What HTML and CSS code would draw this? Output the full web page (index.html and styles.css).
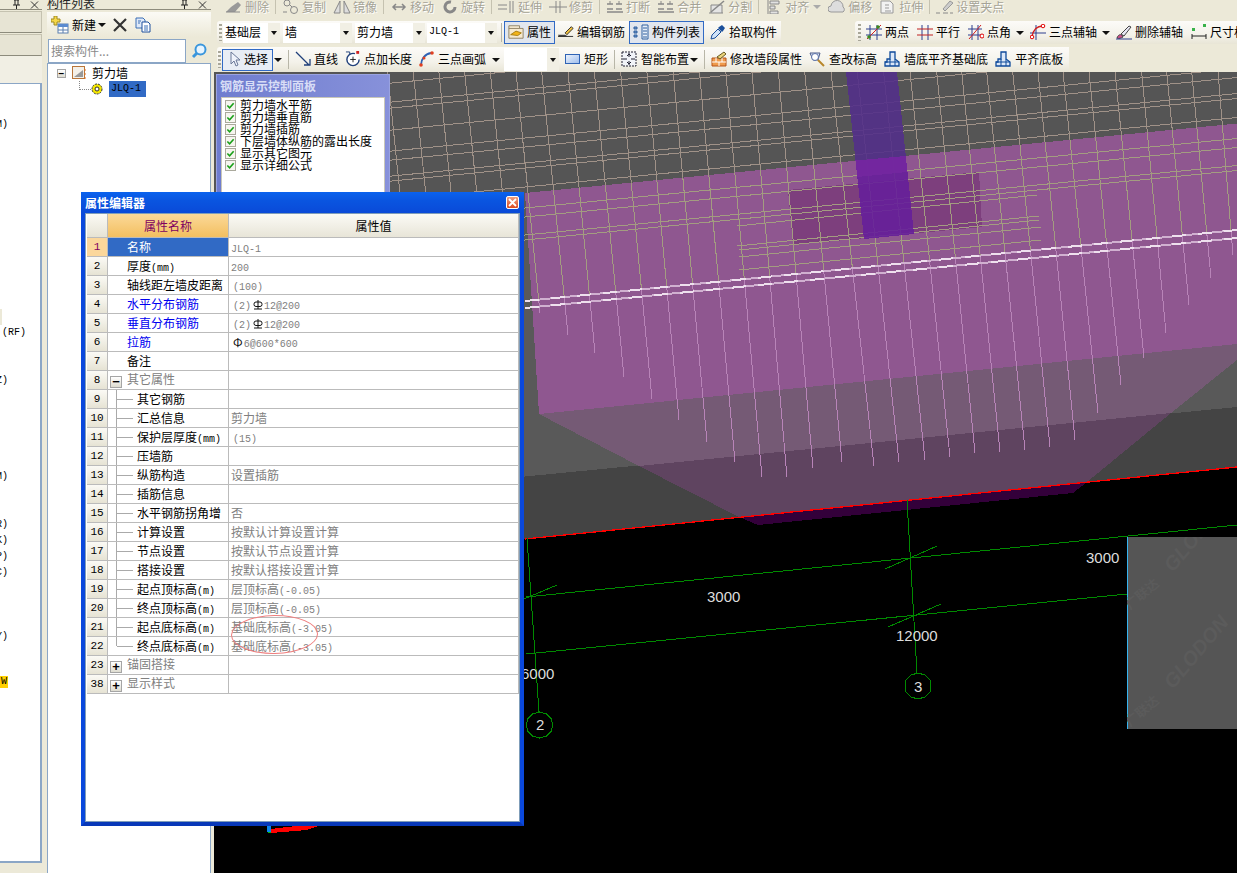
FILE: index.html
```html
<!DOCTYPE html>
<html lang="zh-CN">
<head>
<meta charset="utf-8">
<title>属性编辑器</title>
<link rel="stylesheet" href="styles.css">
</head>
<body>
<svg class="defs" width="0" height="0" aria-hidden="true">
  <symbol id="i-new" viewBox="0 0 18 18"><path d="M3 0h3v3h3v3H6v3H3V6H0V3h3z" fill="#f6d84a" stroke="#a08a20"/><rect x="7" y="8" width="10" height="9" fill="#fff" stroke="#5b7fae"/><path d="M7 8h10v3H7z" fill="#5b8bd0"/><path d="M7 14h10M12 11v6" stroke="#5b7fae"/></symbol>
  <symbol id="i-x" viewBox="0 0 14 14"><path d="M1 1l12 12M13 1L1 13" stroke="#333" stroke-width="2.2"/></symbol>
  <symbol id="i-copy" viewBox="0 0 16 16"><path d="M1 1h7l2 2v8H1z" fill="#dfe9f8" stroke="#3b6fb5"/><path d="M7 5h6l2 2v8H7z" fill="#fff" stroke="#1d4f9c"/><path d="M9 9h4M9 11h4M9 13h4M3 4h3M3 6h2" stroke="#3b6fb5"/></symbol>
  <symbol id="i-search" viewBox="0 0 16 16"><circle cx="9.500" cy="6.500" r="5" fill="#e6f4ff" stroke="#3a96dc" stroke-width="2"/><path d="M6 10l-4 4" stroke="#3a96dc" stroke-width="3"/></symbol>
  <symbol id="i-wall" viewBox="0 0 14 14"><rect x=".5" y=".5" width="12" height="12" fill="#f4f0e8" stroke="#b9763a"/><path d="M2 11l9-7v7z" fill="#999"/><path d="M13 3v2M13 7v2M13 11v2" stroke="#e07020"/></symbol>
  <symbol id="i-gear" viewBox="0 0 12 12"><circle cx="6" cy="6" r="5" fill="#f5e800" stroke="#333" stroke-dasharray="2 1"/><circle cx="6" cy="6" r="2" fill="#fff" stroke="#333"/></symbol>
  <symbol id="i-erase" viewBox="0 0 18 12"><path d="M1 11l5-5 7-5 3 3-6 7z" fill="#999"/><path d="M1 11h14" stroke="#888"/></symbol>
  <symbol id="i-dup" viewBox="0 0 18 14"><circle cx="5" cy="3" r="3" fill="none" stroke="#888"/><circle cx="12" cy="10" r="3.500" fill="none" stroke="#888"/><path d="M1 12h4M8 5l2 2" stroke="#888"/></symbol>
  <symbol id="i-mirror" viewBox="0 0 18 14"><path d="M7 1v12H1zM11 1v12h6z" fill="#ddd" stroke="#888"/></symbol>
  <symbol id="i-move" viewBox="0 0 18 14"><path d="M3 7h12M12 4l3 3-3 3M6 4L3 7l3 3" fill="none" stroke="#888" stroke-width="1.500"/></symbol>
  <symbol id="i-rotate" viewBox="0 0 18 14"><path d="M14 7a5 5 0 1 1-4-5" fill="none" stroke="#888" stroke-width="3"/></symbol>
  <symbol id="i-extend" viewBox="0 0 18 14"><path d="M0 5h9M0 9h9M12 1v12M15 1v12" stroke="#888"/></symbol>
  <symbol id="i-trim" viewBox="0 0 18 14"><path d="M0 7h18M7 1v12M11 1v12" stroke="#888"/></symbol>
  <symbol id="i-break" viewBox="0 0 18 14"><path d="M1 4h6M10 4h6M1 9h6M10 9h6M1 12h16" stroke="#888" stroke-width="1.500"/><path d="M4 1v3M13 1v3" stroke="#888"/></symbol>
  <symbol id="i-split" viewBox="0 0 18 14"><path d="M1 13h14M3 13V5h11v8" fill="#e4e4e4" stroke="#888"/><path d="M3 12L16 1" stroke="#888" stroke-width="1.500"/></symbol>
  <symbol id="i-align" viewBox="0 0 18 14"><path d="M3 0v14" stroke="#888"/><path d="M5 1h9v3H5zM5 6h5v3H5zM5 11h8v3H5z" fill="#e2e2e2" stroke="#888"/></symbol>
  <symbol id="i-offset" viewBox="0 0 18 14"><path d="M3 12a3 3 0 0 1 0-6 6 6 0 0 1 12 1 3 3 0 0 1 0 5z" fill="#ddd" stroke="#999"/></symbol>
  <symbol id="i-stretch" viewBox="0 0 18 14"><path d="M2 1h9l3 3v9H2z" fill="#f2f2f2" stroke="#999"/><path d="M6 5h4M6 8h4M6 11h6" stroke="#999"/></symbol>
  <symbol id="i-grab" viewBox="0 0 18 14"><path d="M7 9l7-8 3 2-8 8z" fill="#ccc" stroke="#999"/><path d="M0 13h4M7 13h5M14 13h3" stroke="#888"/></symbol>
  <symbol id="i-attr" viewBox="0 0 18 16"><path d="M1 1h12v3h4v11H1z" fill="#f6ead0" stroke="#8a7b5c"/><path d="M1 4h12" stroke="#8a7b5c"/><path d="M3 11l6-4 6 2-4 3z" fill="#f3b417" stroke="#a47a10"/></symbol>
  <symbol id="i-pen" viewBox="0 0 18 16"><path d="M0 11h8l3 2H1z" fill="#444"/><path d="M8 9l7-7 2 2-7 7z" fill="#f0c040" stroke="#222"/><path d="M0 13h17" stroke="#222"/></symbol>
  <symbol id="i-list" viewBox="0 0 16 16"><path d="M9 1h6v14H9z" fill="#e6eef8" stroke="#31609f"/><path d="M10 4h4M10 7h4M10 10h4M10 13h4" stroke="#31609f"/><path d="M1 3h3v2H1zM1 7h3v2H1zM1 11h3v2H1z" fill="#6d96c8" stroke="#31609f"/></symbol>
  <symbol id="i-drop" viewBox="0 0 16 16"><path d="M1 15l1-4 6-6 3 3-6 6z" fill="#cfe2f7" stroke="#1b4f9b"/><path d="M9 3l3-2 3 3-2 3 -1 1-4-4z" fill="#1b4f9b"/></symbol>
  <symbol id="i-two" viewBox="0 0 16 16"><path d="M4 1v15M11 1v15M0 5h16M0 11h16" stroke="#2c3f8f"/><path d="M1 15L15 1" stroke="#d02020"/><circle cx="3" cy="13" r="1.800" fill="#3c8a20"/><circle cx="12" cy="3" r="1.800" fill="#3c8a20"/></symbol>
  <symbol id="i-par" viewBox="0 0 16 16"><path d="M5 1v15M11 1v15" stroke="#2c3f8f"/><path d="M0 5h16M0 11h16" stroke="#c02020"/></symbol>
  <symbol id="i-ang" viewBox="0 0 16 16"><path d="M4 1v15M10 1v15M0 5h14M0 11h14" stroke="#2c3f8f"/><path d="M1 15L13 1" stroke="#d02020"/><circle cx="14" cy="12" r="2" fill="#fff" stroke="#e00000"/></symbol>
  <symbol id="i-arc3" viewBox="0 0 16 16"><path d="M6 1v15M0 9h16" stroke="#2c3f8f"/><path d="M2 13C3 6 7 2 13 2" fill="none" stroke="#d02020" stroke-width="1.300"/><circle cx="2" cy="13" r="1.800" fill="#fff" stroke="#e00000"/><circle cx="13" cy="2" r="1.800" fill="#fff" stroke="#e00000"/></symbol>
  <symbol id="i-brush" viewBox="0 0 16 16"><path d="M5 10l8-8 2 1-7 9z" fill="#e8e8f4" stroke="#444"/><path d="M1 14c1-3 3-4 5-3l1 2c-2 1-4 2-6 1z" fill="#d0508c" stroke="#444"/><path d="M0 15h16" stroke="#2c3f8f"/></symbol>
  <symbol id="i-dim" viewBox="0 0 16 16"><rect x="1" y="4" width="3" height="3" fill="#38b24a"/><rect x="12" y="0" width="3" height="3" fill="#38b24a"/><path d="M1 10v5M15 10v5M1 12h14" stroke="#222"/></symbol>
  <symbol id="i-cursor" viewBox="0 0 16 16"><path d="M5 1v12l3-3 2 5 2-1-2-5h4z" fill="#eef2fb" stroke="#6a7898"/></symbol>
  <symbol id="i-line" viewBox="0 0 16 16"><path d="M1 1l13 13M9 14h6V8" fill="none" stroke="#1f3f7a" stroke-width="1.300"/></symbol>
  <symbol id="i-plus" viewBox="0 0 17 17"><circle cx="8.500" cy="9" r="6.500" fill="#fff" stroke="#1f3f7a" stroke-width="1.500" stroke-dasharray="32 9"/><path d="M5.500 9h6M8.500 6v6" stroke="#222"/><path d="M1 1h4v3" fill="none" stroke="#1f3f7a"/><rect x="12" y="0" width="3" height="3" fill="#d02020"/></symbol>
  <symbol id="i-arc" viewBox="0 0 16 16"><path d="M2 14C2 8 6 3 12 2" fill="none" stroke="#2f63b5" stroke-width="1.800"/><circle cx="2" cy="14" r="1.800" fill="#e04020"/><circle cx="5" cy="7" r="1.500" fill="#e04020"/><circle cx="13" cy="2" r="1.800" fill="#e04020"/></symbol>
  <symbol id="i-rect" viewBox="0 0 16 12"><defs><linearGradient id="rg" x1="0" y1="0" x2="1" y2="1"><stop offset="0" stop-color="#eef4fd"/><stop offset="1" stop-color="#9dbcec"/></linearGradient></defs><rect x=".5" y="1.500" width="14" height="9" fill="url(#rg)" stroke="#2f63b5"/></symbol>
  <symbol id="i-smart" viewBox="0 0 16 16"><rect x="1" y="1" width="14" height="14" fill="#f2f4f8" stroke="#223" stroke-dasharray="2 1"/><path d="M8 2v4M8 10v4M2 8h4M10 8h4M6 5l2-2 2 2M6 11l2 2 2-2" fill="none" stroke="#223"/></symbol>
  <symbol id="i-brick" viewBox="0 0 16 16"><path d="M1 7h14v8H1z" fill="#ef9a4c" stroke="#b5541a"/><path d="M1 11h14M5 7v4M11 7v4M8 11v4" stroke="#fff"/><path d="M6 6l7-5 2 2-6 5z" fill="#e8d27a" stroke="#6a5a20"/></symbol>
  <symbol id="i-lens" viewBox="0 0 16 16"><path d="M1 2h10l-2 7H4z" fill="#dfe6f5" stroke="#4a5a88"/><circle cx="6" cy="6" r="3.500" fill="#fff" stroke="#5870a8"/><path d="M9 9l6 6" stroke="#b8862a" stroke-width="2"/></symbol>
  <symbol id="i-base" viewBox="0 0 16 16"><path d="M1 15v-4h2V8h3V1h5v7l4 3v4z" fill="#dbe7f8" stroke="#0f4a9a" stroke-width="1.300"/><path d="M1 11h14M6 8v7M11 8v7" stroke="#0f4a9a"/></symbol>
  <symbol id="i-check" viewBox="0 0 10 10"><path d="M1.500 5l2.500 2.500L8.500 2.500" fill="none" stroke="#19a019" stroke-width="1.800"/></symbol>
  <symbol id="i-pin" viewBox="0 0 9 10"><path d="M2 0h5M3 0v5M6 0v5M1 5h7M4.500 5v5" stroke="#222"/></symbol>
  <symbol id="i-close" viewBox="0 0 9 9"><path d="M1 1l7 7M8 1L1 8" stroke="#333"/></symbol>
  <symbol id="i-closew" viewBox="0 0 9 9"><path d="M1 1l7 7M8 1L1 8" stroke="#fff" stroke-width="1.800"/></symbol>
  <symbol id="i-grade" viewBox="0 0 10 10"><path d="M5 0v9M1 9h8" stroke="#111"/><rect x="1" y="2" width="8" height="4.500" rx="2" fill="none" stroke="#111"/></symbol>
</svg>

<div class="app">
  <aside class="left">
    <div class="ptitle ptitle-left"><svg class="pin"><use href="#i-pin"/></svg><svg class="pin"><use href="#i-close"/></svg></div>
    <div class="left-head"></div>
    <div class="left-head"></div>
    <div class="left-band"></div>
    <ul class="frags">
      <li></li><li></li><li class="f8">(M)</li><li></li><li></li><li></li><li></li><li></li><li></li><li></li><li></li><li></li><li></li><li></li>
      <li class="patch"></li><li class="f26">(RF)</li><li></li><li></li><li class="f8">(Z)</li><li></li><li></li><li></li><li></li><li></li>
      <li class="f8">(M)</li><li></li><li></li><li class="f8">(R)</li><li class="f8">(K)</li><li class="f8">(P)</li><li class="f8">(C)</li><li></li><li></li><li></li>
      <li class="f8">(Y)</li><li></li><li></li><li class="f8 tw"><mark class="hl">W</mark></li>
    </ul>
    <div class="left-foot"></div>
  </aside>
  <div class="sash"></div>
  <section class="list">
    <div class="ptitle"><span class="ptitle-text">构件列表</span><svg class="pin"><use href="#i-pin"/></svg><svg class="pin"><use href="#i-close"/></svg></div>
    <div class="list-tools">
      <svg class="ic18"><use href="#i-new"/></svg><span>新建</span><i class="arrow"></i>
      <svg class="ic-x"><use href="#i-x"/></svg>
      <svg class="ic-copy"><use href="#i-copy"/></svg>
    </div>
    <div class="searchbar">
      <div class="search-input">搜索构件...</div>
      <svg class="ic-search"><use href="#i-search"/></svg>
    </div>
    <div class="tree">
      <div class="tree-root"><span class="toggle">−</span><svg class="ic-wall"><use href="#i-wall"/></svg><span>剪力墙</span></div>
      <div class="tree-leaf"><span class="dots"></span><svg class="ic-gear"><use href="#i-gear"/></svg><span class="leaf-sel m">JLQ-1</span></div>
    </div>
  </section>

  <main class="main">
    <div class="row1">
      <span class="tool"><svg class="ic"><use href="#i-erase"/></svg>删除</span><i class="sep"></i>
      <span class="tool"><svg class="ic"><use href="#i-dup"/></svg>复制</span>
      <span class="tool"><svg class="ic"><use href="#i-mirror"/></svg>镜像</span><i class="sep"></i>
      <span class="tool"><svg class="ic"><use href="#i-move"/></svg>移动</span>
      <span class="tool"><svg class="ic"><use href="#i-rotate"/></svg>旋转</span><i class="sep"></i>
      <span class="tool"><svg class="ic"><use href="#i-extend"/></svg>延伸</span>
      <span class="tool"><svg class="ic"><use href="#i-trim"/></svg>修剪</span><i class="sep"></i>
      <span class="tool"><svg class="ic"><use href="#i-break"/></svg>打断</span>
      <span class="tool"><svg class="ic"><use href="#i-break"/></svg>合并</span>
      <span class="tool"><svg class="ic"><use href="#i-split"/></svg>分割</span><i class="sep"></i>
      <span class="tool"><svg class="ic"><use href="#i-align"/></svg>对齐<i class="arrow arrow-off"></i></span>
      <span class="tool"><svg class="ic"><use href="#i-offset"/></svg>偏移</span>
      <span class="tool"><svg class="ic"><use href="#i-stretch"/></svg>拉伸</span><i class="sep"></i>
      <span class="tool"><svg class="ic"><use href="#i-grab"/></svg>设置夹点</span>
    </div>

    <div class="row2">
      <div class="strip strip-a">
        <i class="grip"></i>
        <div class="combo c57"><span>基础层</span><b class="combo-btn"><i class="arrow"></i></b></div>
        <div class="combo c69"><span>墙</span><b class="combo-btn"><i class="arrow"></i></b></div>
        <div class="combo c70"><span>剪力墙</span><b class="combo-btn"><i class="arrow"></i></b></div>
        <div class="combo c70 tight"><span class="m">JLQ-1</span><b class="combo-btn"><i class="arrow"></i></b></div>
        <i class="vsep"></i>
        <span class="btn btn-attr"><svg class="ic16"><use href="#i-attr"/></svg>属性</span>
        <span class="tool2"><svg class="ic16"><use href="#i-pen"/></svg>编辑钢筋</span>
        <span class="btn btn-list"><svg class="ic16"><use href="#i-list"/></svg>构件列表</span>
        <span class="tool2"><svg class="ic16"><use href="#i-drop"/></svg>拾取构件</span>
      </div>
      <div class="strip strip-b">
        <i class="grip"></i>
        <span class="tool2"><svg class="ic16"><use href="#i-two"/></svg>两点</span>
        <span class="tool2"><svg class="ic16"><use href="#i-par"/></svg>平行</span>
        <span class="tool2"><svg class="ic16"><use href="#i-ang"/></svg>点角</span><i class="arrow arrow-b"></i>
        <span class="tool2"><svg class="ic16"><use href="#i-arc3"/></svg>三点辅轴</span><i class="arrow arrow-b"></i>
        <span class="tool2"><svg class="ic16"><use href="#i-brush"/></svg>删除辅轴</span>
        <span class="tool2"><svg class="ic16"><use href="#i-dim"/></svg>尺寸标注</span>
      </div>
    </div>

    <div class="row3">
      <div class="strip strip-c">
        <i class="grip"></i>
        <span class="btn btn-sel"><svg class="ic16"><use href="#i-cursor"/></svg>选择</span><i class="arrow arrow-s"></i>
        <i class="vsep"></i>
        <span class="tool3"><svg class="ic16"><use href="#i-line"/></svg>直线</span>
        <span class="tool3"><svg class="ic16"><use href="#i-plus"/></svg>点加长度</span>
        <span class="tool3"><svg class="ic16"><use href="#i-arc"/></svg>三点画弧</span><i class="arrow arrow-s3"></i>
        <div class="combo c55"><span></span><b class="combo-btn"><i class="arrow"></i></b></div>
        <span class="tool3"><svg class="ic16"><use href="#i-rect"/></svg>矩形</span>
        <i class="vsep"></i>
        <span class="tool3 g4"><svg class="ic16"><use href="#i-smart"/></svg>智能布置</span><i class="arrow arrow-s2"></i>
        <i class="vsep"></i>
        <span class="tool3"><svg class="ic16"><use href="#i-brick"/></svg>修改墙段属性</span>
        <span class="tool3 g4"><svg class="ic16"><use href="#i-lens"/></svg>查改标高</span>
        <span class="tool3 g4"><svg class="ic16"><use href="#i-base"/></svg>墙底平齐基础底</span>
        <span class="tool3 g4"><svg class="ic16"><use href="#i-base"/></svg>平齐底板</span>
      </div>
    </div>

    <svg class="canvas" viewBox="214 72 1023 801" width="1023" height="801">
      <defs>
        <clipPath id="clip-top"><polygon points="214,72 1237,72 1237,123.500 214,223.400"/></clipPath>
        <clipPath id="clip-mid"><polygon points="214,223.400 1237,123.500 1237,230 214,331.400"/></clipPath>
        <clipPath id="clip-low"><polygon points="214,331.400 1237,230 1237,600 214,600"/></clipPath>
        <clipPath id="clip-gray"><rect x="1127" y="537" width="110" height="192"/></clipPath>
        <path id="verticals" d="M387.500 72L414 330M413.200 72L440 330M438.900 72L465 330M464.600 72L490.600 330M490.300 72L516.300 330M516 72L540 313M541.700 72L568 335M568 72L595 353M594.300 72L624 377M620.600 72L652 399M646.900 72L679 420M673.200 72L707 442M699.500 72L735 462M725.800 72L762 477M752 72L787 477M778.400 72L813 468M804.700 72L842 462M831 72L874 466M857.300 72L899 462M883.600 72L925 460M910 72L950 457M936.700 72L975 453M961.700 72L1000 452M986.700 72L1025 450M1012.700 72L1050 447M1038 72L1075 440M1063 72L1098 413M1089 72L1121 385M1115 72L1144 358M1141.700 72L1166 333M1166.700 72L1189 305M1191.700 72L1211 278M1218 72L1233 255"/>
        <path id="horizontals" d="M388 83.400L1237 0.500M388 102.400L1237 19.500M388 108.400L1237 25.500M388 130.400L1237 47.500M388 151.400L1237 68.500M388 160.400L1237 77.500M388 176.400L1237 93.500M388 181.400L1237 98.500M388 200.400L1237 117.500M388 221.400L1237 138.500M388 230.400L1237 147.500M388 248.400L1237 165.500M388 253.400L1237 170.500"/>
      </defs>
      <rect class="f-black" x="214" y="72" width="1023" height="801"/>
      <polygon class="f-plate" points="214,72 1237,72 1237,123.500 214,223.400"/>
      <polygon class="f-side" points="520,190 700,300 1237,344 1237,467 520,539"/>
      <polygon class="f-sidedark" points="520,477 1237,407 1237,467 520,539"/>
      <polygon class="f-wall" points="525,193 1237,123.500 1237,344 539,414"/>
      <polygon class="f-skirt" points="539,414 1237,344 1237,360 1171,413 639,466"/>
      <polygon class="f-skirtdark" points="639,466 1171,413 1087,482 739,517"/>
      <polygon class="f-strip" points="739,517 1087,482 1073,493 758,525"/>
      <polygon class="f-rect" points="788,190 979,172 982,227 793,245"/>
      <g class="s-top" clip-path="url(#clip-top)"><use href="#verticals"/><use href="#horizontals"/></g>
      <g class="s-mid" clip-path="url(#clip-mid)"><use href="#verticals"/><use href="#horizontals"/><path d="M737 226L1037 195M737 246L1039 216M739 250L1039 220M739 257L1041 227M739 270L1041 240"/></g>
      <g class="s-low" clip-path="url(#clip-low)"><use href="#verticals"/></g>
      <polygon class="f-col1" points="846,72 897,72 905.800,156 855.500,160.500"/>
      <polygon class="f-col2" points="855.500,160.500 905.800,156 914,234 864,239"/>
      <polygon class="f-col3" points="855.500,160.500 905.800,156 907.500,172 857.300,177"/>
      <path class="s-rail" d="M525 301L1237 230M525 308L1237 238"/>
      <path class="s-raildash" d="M525 301L1237 230M525 308L1237 238"/>
      <path class="s-red" d="M525 539L1237 467"/>
      <path class="s-axis" d="M526 597L1237 525M526 654L1127 594M527 538L539 712M907 500L917 673M885 569L937 546M888 627L941 604M524 599L557 585"/>
      <polygon class="s-ring" points="918,673 925,675 930,680 931,686 930,692 925,697 918,699 911,697 906,692 905,686 906,680 911,675"/>
      <polygon class="s-ring" points="539.500,712 546.500,714 551.500,719 552.500,725 551.500,731 546.500,736 539.500,738 532.500,736 527.500,731 526.500,725 527.500,719 532.500,714"/>
      <text class="t-dim" x="707" y="602">3000</text>
      <text class="t-dim" x="1086" y="563">3000</text>
      <text class="t-dim" x="896" y="641">12000</text>
      <text class="t-dim" x="521" y="679">6000</text>
      <text class="t-dim" x="914" y="692">3</text>
      <text class="t-dim" x="536" y="730">2</text>
      <rect class="f-plate" x="1127" y="537" width="110" height="192"/>
      <path class="s-cyan" d="M1127.500 537V729"/>
      <g clip-path="url(#clip-gray)" class="wm">
        <text transform="translate(1173 573) rotate(-50)">GLODON</text>
        <text transform="translate(1173 690) rotate(-50)">GLODON</text>
        <text transform="translate(1130 610) rotate(-40)" class="wm-cn">广联达</text>
        <text transform="translate(1130 727) rotate(-40)" class="wm-cn">广联达</text>
      </g>
      <polygon class="f-red" points="271,829 296,826 318,826 307,830 271,833"/>
      <rect class="f-blue" x="267" y="826" width="4" height="6"/>
      <rect class="f-green" x="268" y="832" width="3" height="1"/>
    </svg>
  </main>

  <div class="rebar-panel">
    <div class="rebar-title">钢筋显示控制面板</div>
    <ul class="rebar-body">
      <li><span class="cb"><svg><use href="#i-check"/></svg></span>剪力墙水平筋</li>
      <li><span class="cb"><svg><use href="#i-check"/></svg></span>剪力墙垂直筋</li>
      <li><span class="cb"><svg><use href="#i-check"/></svg></span>剪力墙插筋</li>
      <li><span class="cb"><svg><use href="#i-check"/></svg></span>下层墙体纵筋的露出长度</li>
      <li><span class="cb"><svg><use href="#i-check"/></svg></span>显示其它图元</li>
      <li><span class="cb"><svg><use href="#i-check"/></svg></span>显示详细公式</li>
    </ul>
  </div>

  <div class="dialog">
    <div class="dlg-title"><span>属性编辑器</span><span class="dlg-close"><svg><use href="#i-closew"/></svg></span></div>
    <div class="dlg-body">
      <table class="props">
        <thead>
          <tr><th class="num"></th><th class="h-name">属性名称</th><th class="h-val">属性值</th></tr>
        </thead>
        <tbody>
          <tr><td class="num num-on">1</td><td class="n n-sel">名称</td><td class="v"><span class="m">JLQ-1</span></td></tr>
          <tr><td class="num">2</td><td class="n">厚度<span class="m">(mm)</span></td><td class="v"><span class="m">200</span></td></tr>
          <tr><td class="num">3</td><td class="n">轴线距左墙皮距离</td><td class="v v-in"><span class="m">(100)</span></td></tr>
          <tr><td class="num">4</td><td class="n blue">水平分布钢筋</td><td class="v v-in"><span class="m">(2)</span><svg class="grade"><use href="#i-grade"/></svg><span class="m">12@200</span></td></tr>
          <tr><td class="num">5</td><td class="n blue">垂直分布钢筋</td><td class="v v-in"><span class="m">(2)</span><svg class="grade"><use href="#i-grade"/></svg><span class="m">12@200</span></td></tr>
          <tr><td class="num">6</td><td class="n blue">拉筋</td><td class="v v-in"><span class="phi">Φ</span><span class="m">6@600*600</span></td></tr>
          <tr><td class="num">7</td><td class="n">备注</td><td class="v"></td></tr>
          <tr><td class="num">8</td><td class="n grp"><span class="toggle">−</span>其它属性</td><td class="v"></td></tr>
          <tr><td class="num">9</td><td class="n ch">其它钢筋</td><td class="v"></td></tr>
          <tr><td class="num">10</td><td class="n ch">汇总信息</td><td class="v">剪力墙</td></tr>
          <tr><td class="num">11</td><td class="n ch">保护层厚度<span class="m">(mm)</span></td><td class="v v-in"><span class="m">(15)</span></td></tr>
          <tr><td class="num">12</td><td class="n ch">压墙筋</td><td class="v"></td></tr>
          <tr><td class="num">13</td><td class="n ch">纵筋构造</td><td class="v">设置插筋</td></tr>
          <tr><td class="num">14</td><td class="n ch">插筋信息</td><td class="v"></td></tr>
          <tr><td class="num">15</td><td class="n ch">水平钢筋拐角增</td><td class="v">否</td></tr>
          <tr><td class="num">16</td><td class="n ch">计算设置</td><td class="v">按默认计算设置计算</td></tr>
          <tr><td class="num">17</td><td class="n ch">节点设置</td><td class="v">按默认节点设置计算</td></tr>
          <tr><td class="num">18</td><td class="n ch">搭接设置</td><td class="v">按默认搭接设置计算</td></tr>
          <tr><td class="num">19</td><td class="n ch">起点顶标高<span class="m">(m)</span></td><td class="v">层顶标高<span class="m">(-0.05)</span></td></tr>
          <tr><td class="num">20</td><td class="n ch">终点顶标高<span class="m">(m)</span></td><td class="v">层顶标高<span class="m">(-0.05)</span></td></tr>
          <tr><td class="num">21</td><td class="n ch">起点底标高<span class="m">(m)</span></td><td class="v">基础底标高<span class="m">(-3.05)</span></td></tr>
          <tr><td class="num">22</td><td class="n ch ch-last">终点底标高<span class="m">(m)</span></td><td class="v">基础底标高<span class="m">(-3.05)</span></td></tr>
          <tr><td class="num">23</td><td class="n grp"><span class="toggle">+</span>锚固搭接</td><td class="v"></td></tr>
          <tr><td class="num">38</td><td class="n grp"><span class="toggle">+</span>显示样式</td><td class="v"></td></tr>
        </tbody>
      </table>
    </div>
    <i class="markup"></i>
  </div>
</div>
</body>
</html>
```

FILE: styles.css
```css
* { box-sizing: border-box; }
html, body { margin: 0; padding: 0; }
body {
  width: 1237px;
  height: 873px;
  overflow: hidden;
  background: #ece9d8;
  font: 12px/16px "Noto Sans CJK SC", "Liberation Sans", sans-serif;
  color: #000;
}
ul { list-style: none; margin: 0; padding: 0; }
i { font-style: normal; }
.defs { position: absolute; }
.m { font-family: "Liberation Mono", monospace; font-size: 10px; line-height: 10px; }

.app {
  position: relative;
  display: grid;
  grid-template-columns: 42px 5px 164px 1026px;
  width: 1237px;
  height: 873px;
}

/* left panel */
.left { display: flex; flex-direction: column; height: 873px; overflow: hidden; }
.ptitle {
  display: flex;
  align-items: center;
  justify-content: flex-end;
  gap: 9px;
  height: 10px;
  padding-right: 4px;
  border-bottom: 1px solid #8d8b7c;
  overflow: hidden;
}
.ptitle-left { padding-right: 3px; }
.ptitle-text { margin-right: auto; margin-top: -4px; font-size: 12px; color: #222; }
.pin { width: 9px; height: 10px; flex: none; }
.left-head {
  height: 22px;
  margin-top: 1px;
  background: #e7e4d4;
  border: 1px solid #c5c2b0;
  border-left: 0;
  border-bottom-color: #8d8b7c;
}
.left-band { height: 27px; background: #f1efe4; }
.frags {
  flex: 1;
  padding-top: 1px;
  background: #fff;
  border-right: 2px solid #8ba6c6;
  border-top: 1px solid #8ba6c6;
  border-bottom: 2px solid #8ba6c6;
  overflow: hidden;
}
.frags li {
  display: flex;
  justify-content: flex-end;
  height: 16px;
  white-space: nowrap;
  overflow: hidden;
  font: 10px/16px "Liberation Mono", monospace;
}
.f8 { width: 8px; }
.f26 { width: 26px; }
.patch { width: 2px; background: #ece9d8; }
.tw { margin-top: -3px; }
.hl { background: #ffd000; color: #000; padding: 0 1px; height: 12px; line-height: 12px; margin-top: 2px; }
.left-foot { height: 10px; flex: none; }
.sash { background: #ece9d8; }

/* component list */
.list { display: flex; flex-direction: column; width: 164px; height: 873px; }
.list-tools {
  display: flex;
  align-items: center;
  height: 25px;
  margin-top: 2px;
  padding-left: 4px;
  background: linear-gradient(#fbfaf5, #ece9d8);
}
.ic18 { width: 18px; height: 18px; margin-right: 3px; }
.list-tools .arrow { margin-left: 2px; }
.ic-x { width: 14px; height: 14px; margin-left: 7px; }
.ic-copy { width: 16px; height: 16px; margin-left: 8px; }
.searchbar { display: flex; align-items: center; height: 26px; padding-top: 1px; }
.search-input {
  width: 138px;
  height: 24px;
  margin-left: 1px;
  padding: 2px;
  background: #fff;
  border: 1px solid #8ba6c6;
  color: #8a8a8a;
  line-height: 18px;
}
.ic-search { width: 16px; height: 16px; margin-left: 5px; }
.tree {
  flex: 1;
  background: #fff;
  border: 1px solid #8ba6c6;
  border-bottom: 0;
  padding-top: 1px;
}
.tree-root { display: flex; align-items: center; height: 16px; padding-left: 9px; }
.toggle {
  display: inline-block;
  flex: none;
  width: 12px;
  height: 12px;
  border: 1px solid #a5a5a5;
  background: linear-gradient(#fff, #dedcd0);
  font: 700 13px/10px "Liberation Sans", sans-serif;
  text-align: center;
  color: #000;
}
.tree-root .toggle { width: 9px; height: 9px; font-size: 10px; line-height: 7px; }
.ic-wall { width: 14px; height: 14px; margin: 0 6px; }
.tree-leaf { display: flex; align-items: center; height: 16px; }
.dots { width: 12px; height: 9px; margin: -7px 0 0 31px; border-left: 1px dotted #888; border-bottom: 1px dotted #888; flex: none; }
.ic-gear { width: 12px; height: 12px; margin: 0 6px 0 0; }
.leaf-sel { width: 37px; height: 16px; padding-left: 2px; background: #316ac5; line-height: 16px; }

/* main column */
.main { display: flex; flex-direction: column; width: 1023px; height: 873px; margin-left: 3px; overflow: hidden; }
.row1 {
  display: flex;
  align-items: center;
  gap: 7px;
  height: 14px;
  padding-left: 11px;
  margin-bottom: 7px;
  color: #a5a396;
  text-shadow: 1px 1px 0 #fff;
  white-space: nowrap;
  line-height: 14px;
}
.tool { display: inline-flex; align-items: center; gap: 2px; flex: none; }
.ic { width: 18px; height: 14px; flex: none; }
.sep { width: 1px; height: 14px; background: #c5c2b0; margin: 0 -1px; flex: none; }
.arrow {
  display: inline-block;
  flex: none;
  width: 0;
  height: 0;
  border-left: 4px solid transparent;
  border-right: 4px solid transparent;
  border-top: 4px solid #111;
}
.arrow-off { border-top-color: #aaa; margin-left: 2px; }

.row2 { display: flex; height: 23px; margin-bottom: 3px; padding-left: 3px; white-space: nowrap; }
.strip {
  display: flex;
  align-items: center;
  background: linear-gradient(#fcfbf8, #f4f2ea 60%, #e8e5d6);
  border-radius: 3px 0 0 3px;
}
.strip-a { width: 564px; flex: none; gap: 3px; }
.strip-b { margin-left: 74px; gap: 8px; width: 382px; flex: none; overflow: hidden; padding-left: 1px; }
.grip { width: 3px; height: 17px; margin: 0 2px; flex: none; background: repeating-linear-gradient(#a8a698 0 2px, transparent 2px 4px); }
.strip-a .grip { margin-right: -2px; }
.strip-b .grip { margin-right: -3px; }
.combo { display: flex; align-items: center; justify-content: space-between; height: 20px; background: #fff; flex: none; overflow: hidden; }
.combo > span { padding: 0 0 2px 2px; }
.combo-btn { display: flex; align-items: center; justify-content: center; width: 12px; height: 20px; background: #f1efe4; flex: none; }
.combo-btn .arrow { border-left-width: 3px; border-right-width: 3px; }
.c57 { width: 57px; }
.c69 { width: 69px; }
.c70 { width: 70px; }
.c55 { width: 55px; }
.tight { margin-left: -1px; }
.vsep { width: 1px; height: 19px; background: #b8b6a8; flex: none; margin: 0 -1px 0 1px; }
.btn {
  display: inline-flex;
  align-items: center;
  gap: 3px;
  flex: none;
  height: 23px;
  padding: 0 0 2px 3px;
  background: #e1e6ee;
  border: 1px solid #316ac5;
}
.ic16 { width: 16px; height: 16px; flex: none; }
.btn-attr { width: 51px; }
.btn-list { width: 75px; margin: 0 3px 0 1px; }
.btn-sel { width: 51px; height: 22px; background: #e8edf5; gap: 2px; }
.tool2 { display: inline-flex; align-items: center; gap: 3px; flex: none; padding-bottom: 2px; }
.strip-b .arrow-b { margin: 0 -2px 0 -3px; }

.row3 { display: flex; height: 25px; padding-left: 3px; white-space: nowrap; }
.strip-c { width: 852px; gap: 7px; flex: none; }
.strip-c .grip { margin: 0 -6px 0 1px; }
.tool3 { display: inline-flex; align-items: center; gap: 3px; flex: none; padding-bottom: 2px; }
.g4 { gap: 4px; }
.arrow-s { margin-left: -6px; }
.arrow-s2 { margin-left: -6px; }
.arrow-s3 { margin-left: -1px; }
.strip-c .vsep { margin: 0 -1px; }
.strip-c .combo { margin: 0 -1px 0 -3px; height: 23px; }
.strip-c .combo-btn { height: 23px; }

/* canvas */
.canvas { display: block; flex: none; shape-rendering: crispEdges; }
.f-black { fill: #000; }
.f-plate { fill: #555; }
.f-side { fill: #595959; }
.f-sidedark { fill: #444; }
.f-wall { fill: #8f5790; }
.f-skirt { fill: #755a75; }
.f-skirtdark { fill: #5f4460; }
.f-strip { fill: #33003a; }
.f-rect { fill: #7d3f7d; }
.f-col1 { fill: #53308a; fill-opacity: .9; }
.f-col2 { fill: #661f9a; fill-opacity: .9; }
.f-col3 { fill: #7427a0; fill-opacity: .9; }
.f-red { fill: #f00; }
.f-blue { fill: #0a84ee; }
.f-green { fill: #0c0; }
.s-top, .s-mid, .s-low { fill: none; stroke-width: 1; }
.s-top { stroke: #a09288; }
.s-mid { stroke: #a39c80; }
.s-low { stroke: #b884b8; }
.s-rail { fill: none; stroke: #d0b0d0; stroke-width: 2; }
.s-raildash { fill: none; stroke: #eee0ee; stroke-width: 2; stroke-dasharray: 14 12; }
.s-red { fill: none; stroke: #f00; stroke-width: 1.3; }
.s-axis { fill: none; stroke: #008a00; stroke-width: 1; }
.s-ring { fill: none; stroke: #008a00; stroke-width: 1; }
.s-cyan { fill: none; stroke: #35b4f0; stroke-width: 1; }
.t-dim { fill: #ddd; font: 15px "Liberation Sans", sans-serif; }
.wm text { fill: #5b5b5b; font: italic bold 20px "Liberation Sans", sans-serif; }
.wm .wm-cn { font: bold 13px "Noto Sans CJK SC", sans-serif; }

/* floating rebar control panel */
.rebar-panel {
  position: absolute;
  left: 216px;
  top: 74px;
  width: 174px;
  height: 122px;
  padding: 0 4px 4px;
  background: linear-gradient(90deg, #6f7dcf, #8791da);
  border: 1px solid #9aa3e0;
}
.rebar-title { height: 22px; margin-left: -1px; font-weight: 700; line-height: 22px; color: #d8ddf6; }
.rebar-body { height: 96px; padding: 1px 0 0 3px; background: #fff; border: 1px solid #c9c7b8; }
.rebar-body li { display: flex; align-items: center; gap: 4px; height: 12px; line-height: 12px; white-space: nowrap; }
.cb { display: inline-flex; width: 11px; height: 11px; flex: none; border: 1px solid #aaa99c; background: #f6f5ef; }
.cb svg { width: 9px; height: 9px; }

/* floating property dialog */
.dialog {
  position: absolute;
  left: 81px;
  top: 192px;
  width: 443px;
  height: 634px;
  display: flex;
  flex-direction: column;
  background: #0a48dc;
  border: 4px solid #0a48dc;
  border-top: 0;
  border-bottom-color: #0838b8;
}
.dlg-title {
  display: flex;
  align-items: center;
  justify-content: space-between;
  flex: none;
  height: 21px;
  margin: 0 -4px;
  padding: 0 4px;
  background: linear-gradient(#0a62ee, #0a55e0 40%, #0a4ad8);
  color: #fff;
  font-weight: 700;
  line-height: 21px;
}
.dlg-close {
  display: flex;
  align-items: center;
  justify-content: center;
  width: 13px;
  height: 13px;
  margin-right: 1px;
  background: linear-gradient(#f0a080, #dc4a20);
  border: 1px solid #fff;
  border-radius: 2px;
}
.dlg-close svg { width: 9px; height: 9px; }
.dlg-body { flex: 1; padding-left: 1px; background: #fff; border: 1px solid #7f9db9; }
.props { width: 432px; border-collapse: separate; border-spacing: 0; table-layout: fixed; }
.props th, .props td {
  height: 19px;
  padding: 0;
  border-right: 1px solid #bbb;
  border-bottom: 1px solid #bbb;
  white-space: nowrap;
  overflow: hidden;
  font-weight: 400;
  line-height: 14px;
}
.props thead th { height: 24px; }
.num { width: 21px; background: linear-gradient(#fbfaf5, #e6e3d4); text-align: center; }
.props td.num { font: 11px/14px "Liberation Mono", monospace; }
.props td.num-on { background: #fbd79b; color: #800060; }
.h-name { width: 121px; background: linear-gradient(#fbd999, #f3bf60); color: #800060; }
.h-val { background: linear-gradient(#fbfaf5, #e8e5d8); }
.props td.n { padding-left: 19px; position: relative; }
.props td.n-sel { background: #316ac5; color: #fff; }
.blue { color: #0000f0; }
.props td.v { padding-left: 2px; color: #808080; }
.props td.v-in { padding-left: 4px; }
.grade { width: 10px; height: 10px; margin: 0 1px 0 2px; vertical-align: -1px; }
.phi { color: #111; margin-right: 1px; line-height: 10px; }
.props td.grp { padding-left: 2px; color: #808080; }
.grp .toggle { margin-right: 5px; vertical-align: -2px; }
.props td.ch { padding-left: 29px; }
.ch::before { content: ""; position: absolute; left: 8px; top: 0; bottom: 0; border-left: 1px solid #aaa; }
.ch-last::before { bottom: 9px; }
.ch::after { content: ""; position: absolute; left: 9px; top: 9px; width: 16px; border-top: 1px solid #aaa; }
.markup {
  position: absolute;
  left: 146px;
  top: 423px;
  width: 87px;
  height: 39px;
  border: 1px solid #ef7f7f;
  border-radius: 50%;
  transform: rotate(-1deg);
}
```
